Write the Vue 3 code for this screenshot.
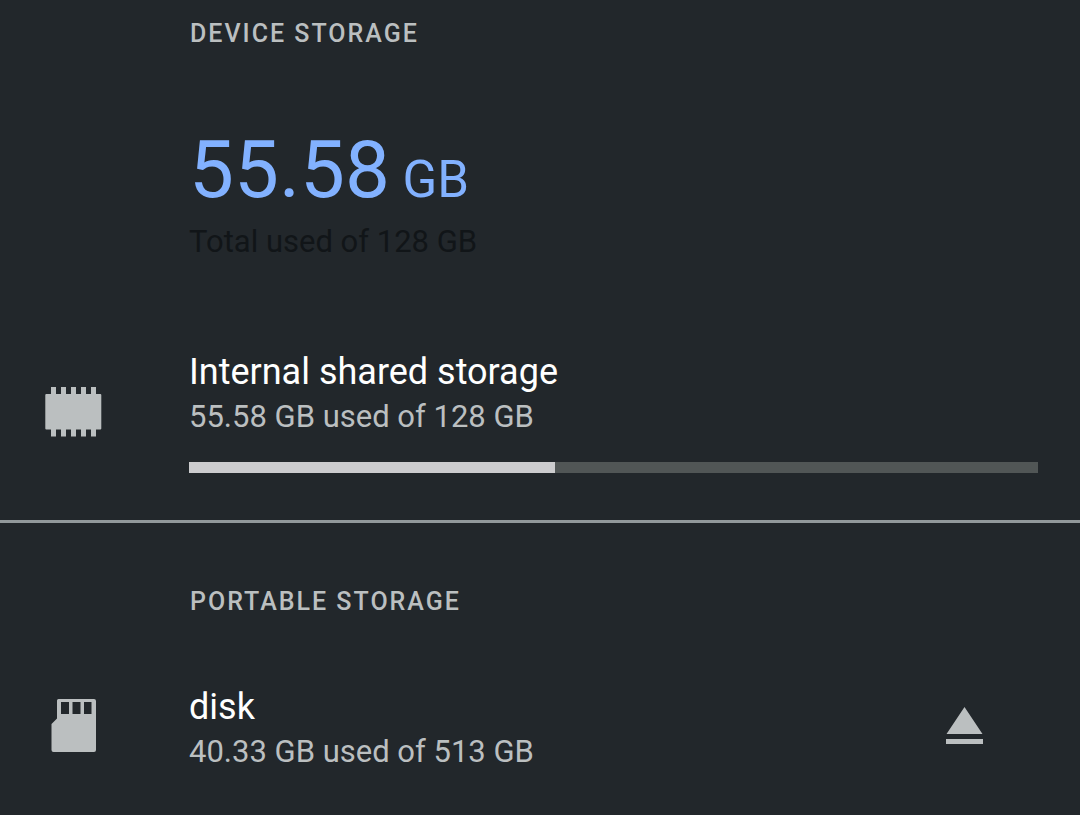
<script setup>
const deviceUsed = 55.58
const deviceTotal = 128
const usedPercent = 43.1
</script>

<template>
  <main class="storage">
    <section class="device">
      <h2 class="heading">DEVICE STORAGE</h2>
      <div class="summary">
        <p class="amount">{{ deviceUsed }}<span class="unit">&nbsp;GB</span></p>
        <p class="caption">Total used of {{ deviceTotal }} GB</p>
      </div>
      <div class="row">
        <svg class="icon" viewBox="0 0 60 60" aria-hidden="true">
          <path d="M4 13H9V6H14V13H19V6H24V13H29V6H34V13H39V6H44V13H49V6H54V13H58.300Q59.300 13 59.300 14V47.500Q59.300 48.500 58.300 48.500H54V55.500H49V48.500H44V55.500H39V48.500H34V55.500H29V48.500H24V55.500H19V48.500H14V55.500H9V48.500H4.300Q3.300 48.500 3.300 47.500V14Q3.300 13 4.300 13Z" />
        </svg>
        <div class="details">
          <h3 class="title">Internal shared storage</h3>
          <p class="info">{{ deviceUsed }} GB used of {{ deviceTotal }} GB</p>
          <div class="bar" role="progressbar" aria-label="Internal shared storage used" :aria-valuenow="usedPercent">
            <div class="fill" :style="{ width: usedPercent + '%' }"></div>
          </div>
        </div>
      </div>
    </section>
    <section class="portable">
      <h2 class="heading">PORTABLE STORAGE</h2>
      <div class="row disk">
        <svg class="icon" viewBox="0 0 60 60" aria-hidden="true">
          <path fill-rule="evenodd" d="M16.500 1H52Q54 1 54 3V52Q54 54 52 54H11.500Q9.500 54 9.500 52V26L15 20.500V2.500Q15 1 16.500 1ZM19 4V16H27V4ZM30.500 4V16H38.500V4ZM42 4V16H49.500V4Z" />
        </svg>
        <div class="details">
          <h3 class="title">disk</h3>
          <p class="info">40.33 GB used of 513 GB</p>
        </div>
        <button class="eject" type="button" aria-label="Eject disk">
          <svg viewBox="0 0 60 60" aria-hidden="true"><path d="M28.500 9L46.500 36H10.500ZM10 41H47V46H10Z" /></svg>
        </button>
      </div>
    </section>
  </main>
</template>

<style>
html, body { background: #22272b; }
body { margin: 0; }
</style>

<style scoped>
.storage { min-height: 100vh; box-sizing: border-box; font-family: Roboto, sans-serif; color: #bbbfc0; background: #22272b; }
h2, h3, p { margin: 0; font-weight: 400; }
.device { padding: 19px 42px 47px 0; border-bottom: 3px solid #92999b; }
.portable { padding: 64px 84px 28px 0; }
.heading { margin-left: 190px; font-size: 25px; line-height: 30px; font-weight: 500; letter-spacing: 2px; }
.summary { margin: 79px 0 0 189px; }
.amount { font-size: 80px; line-height: 84px; color: #82b1ff; }
.unit { font-size: 51px; }
.caption { font-size: 31px; line-height: 40px; color: #111518; }
.row { display: flex; align-items: center; margin-top: 86px; }
.icon { width: 60px; height: 60px; flex: none; margin: 0 87px 0 42px; fill: #bbbfc0; }
.details { flex: 1; }
.title { font-size: 36px; line-height: 48px; color: #fff; }
.info { font-size: 31px; line-height: 42px; }
.bar { height: 11px; margin-top: 24px; background: #515656; }
.fill { height: 100%; background: #ccccce; }
.disk { margin-top: 66px; }
.eject { padding: 0; border: 0; background: none; width: 60px; height: 60px; cursor: pointer; }
.eject svg { display: block; width: 60px; height: 60px; fill: #bbbfc0; }
</style>
